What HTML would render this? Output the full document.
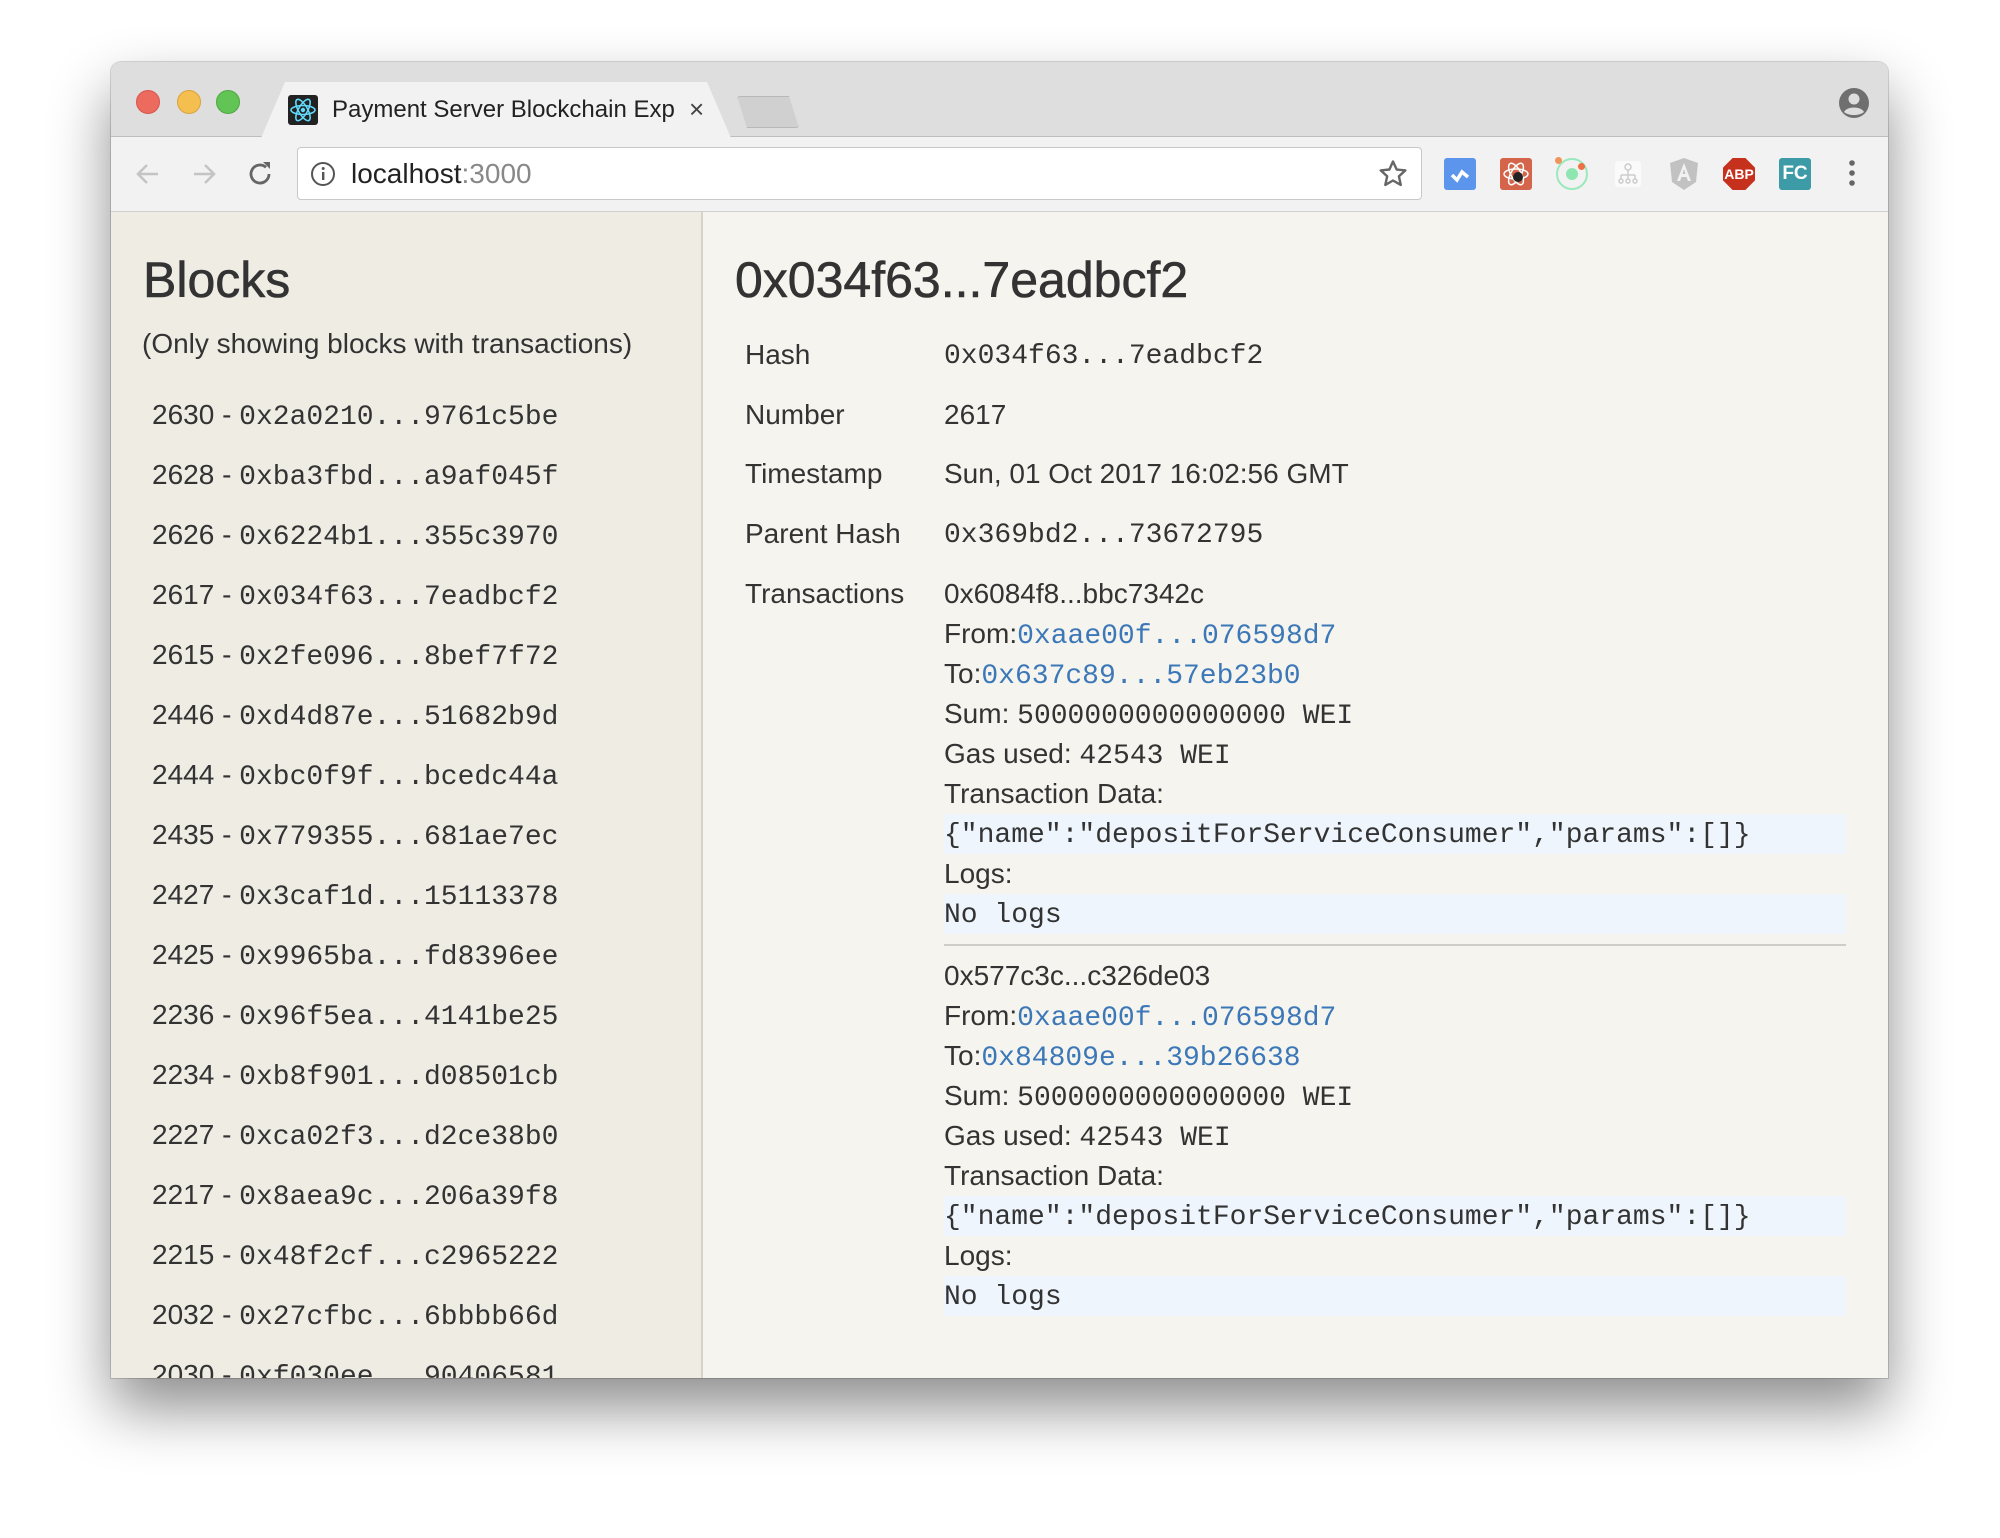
<!DOCTYPE html>
<html><head><meta charset="utf-8"><style>
*{margin:0;padding:0;box-sizing:border-box}
body{width:2000px;height:1538px;background:#fff;position:relative;overflow:hidden;font-family:"Liberation Sans",Arial,sans-serif;color:#333}
.win{position:absolute;left:111px;top:62px;width:1777px;height:1316px;border-radius:10px 10px 0 0;overflow:hidden;box-shadow:0 30px 60px rgba(0,0,0,0.45),0 0 0 1px rgba(0,0,0,0.15)}
.title{position:absolute;left:0;top:0;width:100%;height:75px;background:#dedede;border-bottom:1px solid #bdbdbd}
.dot{position:absolute;top:28px;width:24px;height:24px;border-radius:50%}
.tab{position:absolute;left:150px;top:20px;width:470px;height:56px;background:#f2f2f2;clip-path:polygon(0 100%,24px 0,446px 0,470px 100%);}
.tool{position:absolute;left:0;top:75px;width:100%;height:75px;background:#f2f2f2;border-bottom:1px solid #d0d0d0}
.url{position:absolute;left:186px;top:10px;width:1125px;height:53px;background:#fff;border:1px solid #c8c8c8;border-radius:4px}
.ext{position:absolute;top:21px;width:32px;height:32px;border-radius:3px}
.content{position:absolute;left:0;top:150px;width:100%;height:1166px;background:#f6f4ee;overflow:hidden}
.side{position:absolute;left:0;top:0;width:592px;height:100%;background:#efece4;border-right:2px solid #d6d3cc}
.a{position:absolute;white-space:nowrap;line-height:40px;font-size:28px}
.m{font-family:"Liberation Mono","Courier New",monospace;font-size:28px}
.h1{font-size:50px;line-height:60px;-webkit-text-stroke:0.6px #333}
.lnk{color:#3c78b8}
.code{position:absolute;left:833px;width:902px;height:40px;background:#eef5fc}
</style></head><body>
<div class="win">
 <div class="title">
  <div class="dot" style="left:25px;background:#ed6a5e;border:1px solid #d5554a"></div>
  <div class="dot" style="left:66px;background:#f5bf4f;border:1px solid #d9a23b"></div>
  <div class="dot" style="left:105px;background:#61c454;border:1px solid #4ea83f"></div>
  <div class="tab"></div>
  <div style="position:absolute;left:177px;top:33px;width:30px;height:30px;background:#222;border-radius:3px">
   <svg width="30" height="30" viewBox="0 0 30 30"><g fill="none" stroke="#61dafb" stroke-width="1.6"><ellipse cx="15" cy="15" rx="12" ry="4.5"/><ellipse cx="15" cy="15" rx="12" ry="4.5" transform="rotate(60 15 15)"/><ellipse cx="15" cy="15" rx="12" ry="4.5" transform="rotate(-60 15 15)"/></g><circle cx="15" cy="15" r="2.2" fill="#61dafb"/></svg>
  </div>
  <div style="position:absolute;left:221px;top:32px;font-size:24px;line-height:32px;color:#222;white-space:nowrap;width:344px;overflow:hidden">Payment Server Blockchain Exp</div>
  <div style="position:absolute;left:578px;top:30px;font-size:26px;line-height:34px;color:#444">×</div>
  <div style="position:absolute;left:626px;top:34px;width:62px;height:32px;background:#d0d0d0;border:1px solid #b8b8b8;clip-path:polygon(0 0,52px 0,62px 100%,10px 100%);border-radius:3px"></div>
  <svg style="position:absolute;left:1727px;top:25px" width="32" height="32" viewBox="0 0 32 32"><circle cx="16" cy="16" r="15" fill="#6f6f6f"/><circle cx="16" cy="12" r="5.5" fill="#dedede"/><path d="M6 25c3-6 17-6 20 0c-5 4-15 4-20 0z" fill="#dedede"/></svg>
 </div>
 <div class="tool">
  <svg style="position:absolute;left:22px;top:22px" width="30" height="30" viewBox="0 0 30 30"><path d="M25 15H6M14 6l-9 9 9 9" fill="none" stroke="#c4c4c4" stroke-width="2.5"/></svg>
  <svg style="position:absolute;left:78px;top:22px" width="30" height="30" viewBox="0 0 30 30"><path d="M5 15h19M16 6l9 9-9 9" fill="none" stroke="#c4c4c4" stroke-width="2.5"/></svg>
  <svg style="position:absolute;left:134px;top:22px" width="30" height="30" viewBox="0 0 30 30"><path d="M24 15a9 9 0 1 1-3-6.7" fill="none" stroke="#666" stroke-width="2.8"/><path d="M18 3h7v7z" fill="#666"/></svg>
  <div class="url">
   <svg style="position:absolute;left:12px;top:13px" width="26" height="26" viewBox="0 0 26 26"><circle cx="13" cy="13" r="11" fill="none" stroke="#555" stroke-width="2"/><rect x="12" y="11" width="2.4" height="8" fill="#555"/><circle cx="13.2" cy="7.5" r="1.5" fill="#555"/></svg>
   <div style="position:absolute;left:53px;top:8px;font-size:28px;line-height:36px;color:#222">localhost<span style="color:#888">:3000</span></div>
   <svg style="position:absolute;left:1080px;top:11px" width="30" height="30" viewBox="0 0 30 30"><path d="M15 2.5l3.7 8 8.7.9-6.5 5.9 1.9 8.6L15 21.5l-7.7 4.4 1.9-8.6-6.5-5.9 8.7-.9z" fill="none" stroke="#666" stroke-width="2.4" stroke-linejoin="round"/></svg>
  </div>
  <div class="ext" style="left:1333px;background:#5b96ec"><svg width="32" height="32"><path d="M8 17l5 5 5-8 6 5" fill="none" stroke="#fff" stroke-width="3.5"/></svg></div>
  <div class="ext" style="left:1389px;background:#d4644a"><svg width="32" height="32"><g fill="none" stroke="#fff" stroke-width="1.5"><ellipse cx="16" cy="16" rx="12" ry="5"/><ellipse cx="16" cy="16" rx="12" ry="5" transform="rotate(60 16 16)"/><ellipse cx="16" cy="16" rx="12" ry="5" transform="rotate(-60 16 16)"/></g><circle cx="18" cy="19" r="5" fill="#222"/></svg></div>
  <div class="ext" style="left:1445px;border-radius:50%;border:2px solid #9be8bd;background:none"><div style="position:absolute;left:8px;top:8px;width:12px;height:12px;border-radius:50%;background:#8ee6b0"></div><div style="position:absolute;left:-3px;top:-3px;width:7px;height:7px;border-radius:50%;background:#ef955a"></div><div style="position:absolute;left:20px;top:3px;width:7px;height:7px;border-radius:50%;background:#ee7045"></div></div>
  <div class="ext" style="left:1504px;top:24px;width:26px;height:26px;background:#fafafa"><svg width="26" height="26"><g fill="none" stroke="#ccc" stroke-width="1.5"><circle cx="13" cy="6" r="3"/><path d="M13 9v5M6 14h14M6 14v4M13 14v4M20 14v4"/><circle cx="6" cy="20" r="2"/><circle cx="13" cy="20" r="2"/><circle cx="20" cy="20" r="2"/></g></svg></div>
  <svg style="position:absolute;left:1557px;top:20px" width="32" height="34" viewBox="0 0 32 34"><path d="M16 1l14 5-2 19-12 8-12-8-2-19z" fill="#c2c2c2"/><path d="M16 6l-7 18h3l1.5-4h5l1.5 4h3zm-1.5 11l1.5-5 1.5 5z" fill="#f2f2f2"/></svg>
  <div class="ext" style="left:1612px;background:#c5311d;clip-path:polygon(30% 0,70% 0,100% 30%,100% 70%,70% 100%,30% 100%,0 70%,0 30%);border-radius:0;color:#fff;font-weight:bold;font-size:14px;line-height:32px;text-align:center">ABP</div>
  <div class="ext" style="left:1668px;background:#3c9ba6;color:#fff;font-weight:bold;font-size:19px;line-height:32px;text-align:center">FC</div>
  <svg style="position:absolute;left:1733px;top:20px" width="16" height="34"><circle cx="8" cy="6" r="2.8" fill="#666"/><circle cx="8" cy="16" r="2.8" fill="#666"/><circle cx="8" cy="26" r="2.8" fill="#666"/></svg>
 </div>
 <div class="content">
  <div class="side">
   <div class="a h1" style="left:32px;top:38px">Blocks</div>
   <div class="a" style="left:31px;top:112px">(Only showing blocks with transactions)</div>
   <div class="a" style="left:41px;top:183px">2630 - <span class="m">0x2a0210...9761c5be</span></div>
   <div class="a" style="left:41px;top:243px">2628 - <span class="m">0xba3fbd...a9af045f</span></div>
   <div class="a" style="left:41px;top:303px">2626 - <span class="m">0x6224b1...355c3970</span></div>
   <div class="a" style="left:41px;top:363px">2617 - <span class="m">0x034f63...7eadbcf2</span></div>
   <div class="a" style="left:41px;top:423px">2615 - <span class="m">0x2fe096...8bef7f72</span></div>
   <div class="a" style="left:41px;top:483px">2446 - <span class="m">0xd4d87e...51682b9d</span></div>
   <div class="a" style="left:41px;top:543px">2444 - <span class="m">0xbc0f9f...bcedc44a</span></div>
   <div class="a" style="left:41px;top:603px">2435 - <span class="m">0x779355...681ae7ec</span></div>
   <div class="a" style="left:41px;top:663px">2427 - <span class="m">0x3caf1d...15113378</span></div>
   <div class="a" style="left:41px;top:723px">2425 - <span class="m">0x9965ba...fd8396ee</span></div>
   <div class="a" style="left:41px;top:783px">2236 - <span class="m">0x96f5ea...4141be25</span></div>
   <div class="a" style="left:41px;top:843px">2234 - <span class="m">0xb8f901...d08501cb</span></div>
   <div class="a" style="left:41px;top:903px">2227 - <span class="m">0xca02f3...d2ce38b0</span></div>
   <div class="a" style="left:41px;top:963px">2217 - <span class="m">0x8aea9c...206a39f8</span></div>
   <div class="a" style="left:41px;top:1023px">2215 - <span class="m">0x48f2cf...c2965222</span></div>
   <div class="a" style="left:41px;top:1083px">2032 - <span class="m">0x27cfbc...6bbbb66d</span></div>
   <div class="a" style="left:41px;top:1143px">2030 - <span class="m">0xf030ee...90406581</span></div>
  </div>
  <div class="a h1" style="left:624px;top:38px">0x034f63...7eadbcf2</div>
  <div class="a" style="left:634px;top:123px">Hash</div><div class="a m" style="left:833px;top:125px">0x034f63...7eadbcf2</div>
  <div class="a" style="left:634px;top:183px">Number</div><div class="a" style="left:833px;top:183px">2617</div>
  <div class="a" style="left:634px;top:242px">Timestamp</div><div class="a" style="left:833px;top:242px">Sun, 01 Oct 2017 16:02:56 GMT</div>
  <div class="a" style="left:634px;top:302px">Parent Hash</div><div class="a m" style="left:833px;top:304px">0x369bd2...73672795</div>
  <div class="a" style="left:634px;top:362px">Transactions</div>
  <div class="a" style="left:833px;top:362px">0x6084f8...bbc7342c</div>
  <div class="a" style="left:833px;top:402px">From:<span class="m lnk">0xaae00f...076598d7</span></div>
  <div class="a" style="left:833px;top:442px">To:<span class="m lnk">0x637c89...57eb23b0</span></div>
  <div class="a" style="left:833px;top:482px">Sum: <span class="m">5000000000000000 WEI</span></div>
  <div class="a" style="left:833px;top:522px">Gas used: <span class="m">42543 WEI</span></div>
  <div class="a" style="left:833px;top:562px">Transaction Data:</div>
  <div class="code" style="top:602px"></div>
  <div class="a m" style="left:833px;top:604px">{"name":"depositForServiceConsumer","params":[]}</div>
  <div class="a" style="left:833px;top:642px">Logs:</div>
  <div class="code" style="top:682px"></div>
  <div class="a m" style="left:833px;top:684px">No logs</div>
  <div style="position:absolute;left:833px;top:732px;width:902px;height:2px;background:#cfcdc8"></div>
  <div class="a" style="left:833px;top:744px">0x577c3c...c326de03</div>
  <div class="a" style="left:833px;top:784px">From:<span class="m lnk">0xaae00f...076598d7</span></div>
  <div class="a" style="left:833px;top:824px">To:<span class="m lnk">0x84809e...39b26638</span></div>
  <div class="a" style="left:833px;top:864px">Sum: <span class="m">5000000000000000 WEI</span></div>
  <div class="a" style="left:833px;top:904px">Gas used: <span class="m">42543 WEI</span></div>
  <div class="a" style="left:833px;top:944px">Transaction Data:</div>
  <div class="code" style="top:984px"></div>
  <div class="a m" style="left:833px;top:986px">{"name":"depositForServiceConsumer","params":[]}</div>
  <div class="a" style="left:833px;top:1024px">Logs:</div>
  <div class="code" style="top:1064px"></div>
  <div class="a m" style="left:833px;top:1066px">No logs</div>
 </div>
</div>
</body></html>
